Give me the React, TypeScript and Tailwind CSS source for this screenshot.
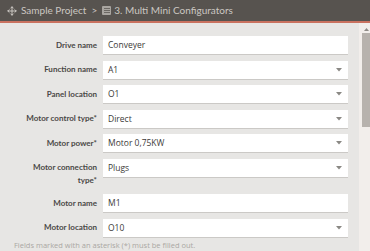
import { Move } from 'lucide-react'

const FIELDS: { label: string[]; value: string; select: boolean }[] = [
  { label: ['Drive name'], value: 'Conveyer', select: false },
  { label: ['Function name'], value: 'A1', select: true },
  { label: ['Panel location'], value: 'O1', select: true },
  { label: ['Motor control type*'], value: 'Direct', select: true },
  { label: ['Motor power*'], value: 'Motor 0,75KW', select: true },
  { label: ['Motor connection', 'type*'], value: 'Plugs', select: true },
  { label: ['Motor name'], value: 'M1', select: false },
  { label: ['Motor location'], value: 'O10', select: true },
]

function Caret() {
  return (
    <svg width="6" height="4" viewBox="0 0 6 4" className="absolute right-[6px] top-[7px]">
      <path d="M0 0h6L3 3.5z" fill="#8a8884" />
    </svg>
  )
}

export default function App() {
  return (
    <div className="flex h-[251px] w-[370px] flex-col overflow-hidden bg-[#e7e6e4] font-['Open_Sans',sans-serif]">
      {/* header */}
      <div className="flex h-[21px] shrink-0 items-center gap-[3px] bg-[#57534f] pl-[7px] font-['Lato',sans-serif] text-[10px] text-[#cbc7c2]">
        <Move className="h-[10px] w-[10px]" strokeWidth={2.4} />
        <span className="ml-[1px]">Sample Project</span>
        <span className="mx-[2px]">&gt;</span>
        <span className="flex h-[9px] w-[9px] flex-col justify-center gap-[1px] rounded-[1px] bg-[#a9a5a0] px-[1.5px]">
          <span className="h-[1px] bg-[#6c6863]" />
          <span className="h-[1px] bg-[#6c6863]" />
          <span className="h-[1px] bg-[#6c6863]" />
        </span>
        <span>3. Multi Mini Configurators</span>
      </div>
      <div className="h-[2px] shrink-0 bg-[#c9715f]" />

      <div className="flex min-h-0 flex-1">
        {/* form */}
        <div className="flex flex-1 flex-col pt-[13px]">
          <div className="flex flex-col gap-[6.6px]">
            {FIELDS.map((f) => (
              <div key={f.label[0]} className="flex items-start">
                <div className="w-[97px] shrink-0 whitespace-nowrap pt-[2.5px] text-right font-['Lato',sans-serif] text-[8px] font-bold leading-[13px] text-[#4a4846]">
                  {f.label.map((l) => (
                    <div key={l}>{l}</div>
                  ))}
                </div>
                <div className="relative ml-[6px] h-[18px] w-[245px] shrink-0 bg-white pl-[5px] text-[8.5px] leading-[18px] text-[#3c3a38] shadow-[0_1px_0_#cbc9c6]">
                  {f.value}
                  {f.select && <Caret />}
                </div>
              </div>
            ))}
          </div>
          <p className="mt-[3px] pl-[14px] text-[7.5px] text-[#aaa7a3]">
            Fields marked with an asterisk (*) must be filled out.
          </p>
        </div>

        {/* scrollbar */}
        <div className="flex w-[11px] shrink-0 flex-col items-end bg-[#f2eeeb]">
          <div className="flex h-[10px] w-full items-center justify-center pl-[3px] pt-[3px]">
            <svg width="5" height="3" viewBox="0 0 5 3">
              <path d="M0 3h5L2.5 0z" fill="#8f8b87" />
            </svg>
          </div>
          <div className="h-[94px] w-[8px] bg-[#b7b2ad]" />
        </div>
      </div>
    </div>
  )
}
